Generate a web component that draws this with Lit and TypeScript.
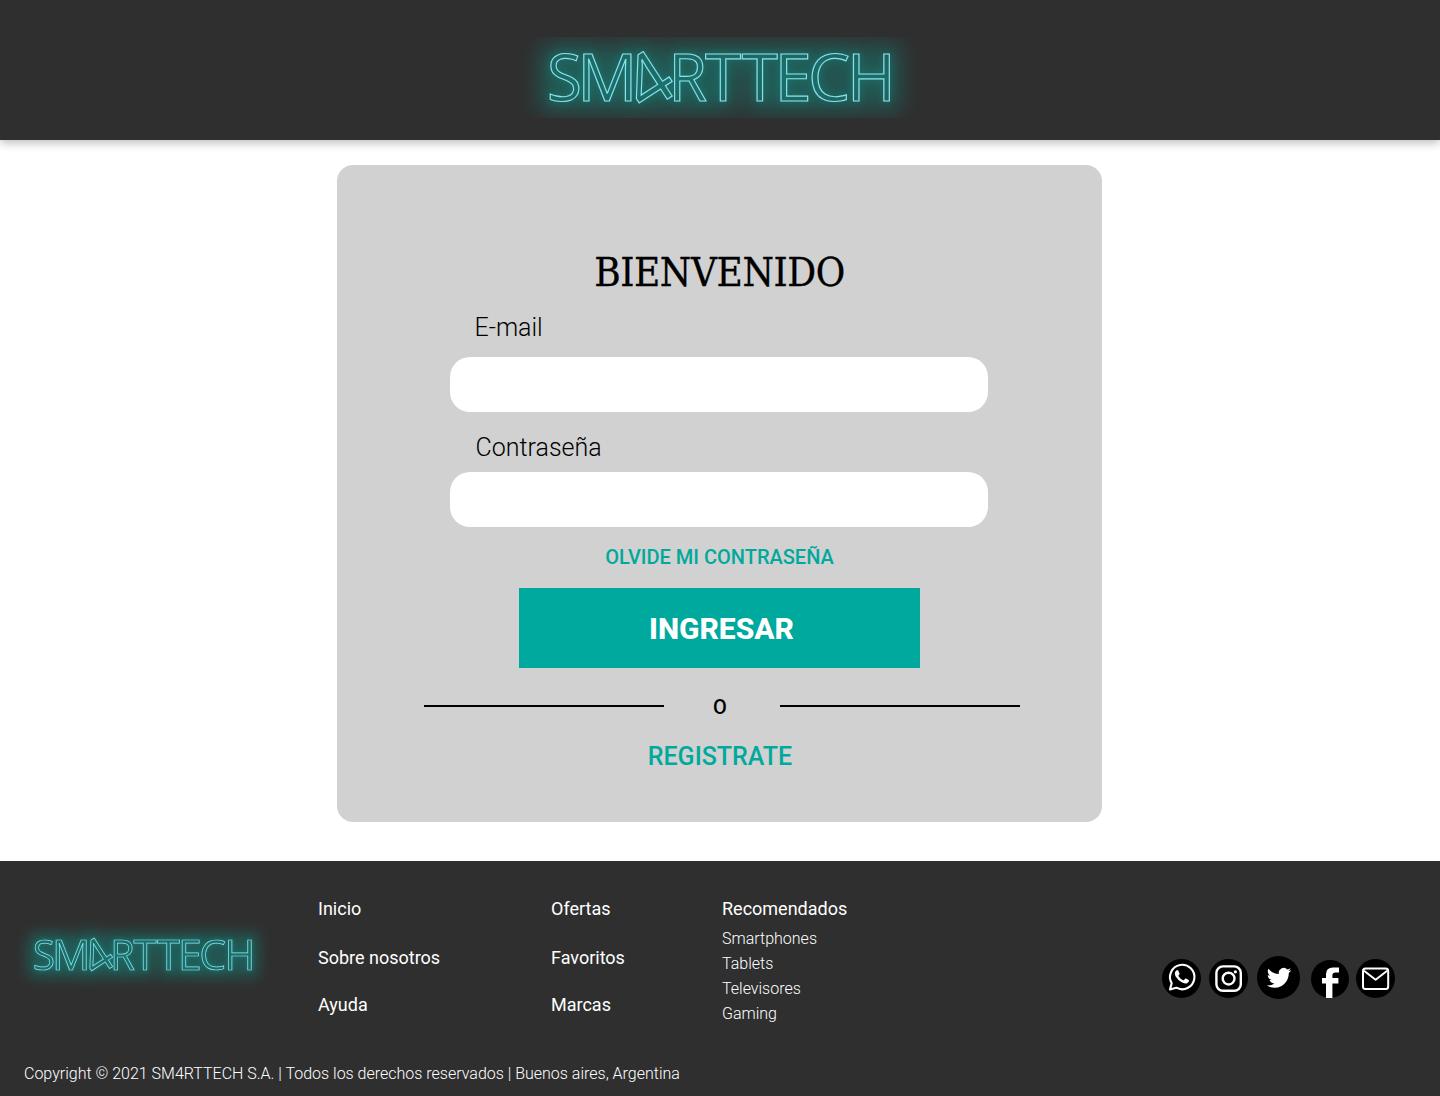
import { LitElement, html, css, svg } from "lit";
import { customElement, property } from "lit/decorators.js";

// Glyph, x of its origin and horizontal scale; all upright letters share a 101px baseline.
const LETTERS: [string, number, number][] = [
  ["S", 546.9, 0.98], ["M", 577.2, 1.03], ["R", 668.4, 0.96], ["T", 705, 1.01],
  ["T", 741.7, 1.01], ["E", 774.6, 1.03], ["C", 808, 1.03], ["H", 847, 1.02],
];

@customElement("neon-logo")
export class NeonLogo extends LitElement {
  @property() box = "510 37 420 81";
  @property({ type: Number }) glowTop = 37;
  @property({ type: Number }) glowHeight = 81;
  static styles = css`
    :host { display: block; }
    svg { display: block; width: 100%; height: 100%; overflow: visible; }
    text {
      font-family: "Open Sans", "Liberation Sans", sans-serif;
      font-size: 65px;
      fill: rgba(40, 130, 128, 0.15);
      stroke: #83e3ee;
      stroke-width: 1.15px;
    }
    .four { font-size: 74px; }
  `;
  render() {
    return html`<svg viewBox=${this.box} aria-label="SM4RTTECH">
      <defs>
        <filter id="neon" filterUnits="userSpaceOnUse" x="490" y=${this.glowTop} width="460" height=${this.glowHeight} color-interpolation-filters="sRGB">
          <feComponentTransfer in="SourceAlpha" result="solid"><feFuncA type="linear" slope="6" /></feComponentTransfer>
          <feMorphology in="solid" operator="dilate" radius="9" result="fat" />
          <feGaussianBlur in="fat" stdDeviation="11" result="wide" />
          <feFlood flood-color="#0f9a90" flood-opacity="0.42" />
          <feComposite in2="wide" operator="in" result="haze" />
          <feGaussianBlur in="solid" stdDeviation="4" result="near" />
          <feFlood flood-color="#0fa89e" flood-opacity="0.3" />
          <feComposite in2="near" operator="in" result="halo" />
          <feMerge>
            <feMergeNode in="haze" />
            <feMergeNode in="halo" />
            <feMergeNode in="SourceGraphic" />
          </feMerge>
        </filter>
      </defs>
      <g filter="url(#neon)">
        ${LETTERS.map(([c, x, s]) => svg`<text transform="translate(${x} 101) scale(${s} 1)">${c}</text>`)}
        <text class="four" transform="translate(644.4 114) rotate(-33)">4</text>
      </g>
    </svg>`;
  }
}

@customElement("app-root")
export class AppRoot extends LitElement {
  static styles = css`
    :host {
      display: flex;
      flex-direction: column;
      height: 1096px;
      background: #fff;
      font-family: Roboto, "Liberation Sans", sans-serif;
      color: #000;
    }
    * { box-sizing: border-box; }
    a { color: inherit; text-decoration: none; }
    header {
      height: 140px;
      padding-top: 37px;
      background: #2f2f2f;
      box-shadow: 0 3px 9px rgba(0, 0, 0, 0.26);
      flex: none;
    }
    .logo-top { width: 420px; height: 81px; margin: 0 auto; }
    main { height: 721px; padding: 25px 0 0 337px; flex: none; }
    .card {
      width: 765px;
      height: 657px;
      padding: 79px 82px 0;
      border-radius: 16px;
      background: #d1d1d1;
      display: flex;
      flex-direction: column;
      align-items: center;
    }
    h1 {
      margin: 0;
      font: 400 40px/56px "Roboto Slab", "DejaVu Serif Condensed", "DejaVu Serif", serif;
      font-stretch: condensed;
      letter-spacing: -0.4px;
      height: 56px;
      -webkit-text-stroke: 0.3px #000;
      white-space: nowrap;
    }
    .field { width: 538px; margin-right: 1px; display: flex; flex-direction: column; }
    .field label { padding-left: 24.5px; font-weight: 300; font-size: 25px; line-height: 32px; }
    .field input { height: 55px; border: 0; border-radius: 20px; background: #fff; padding: 0 24px; font: 300 22px Roboto, sans-serif; }
    .mail { margin-top: 12px; gap: 13px; }
    .pass { margin-top: 20px; gap: 8px; }
    .pass label { padding-left: 25.5px; }
    .forgot { margin-top: 17px; font-weight: 500; font-size: 20px; line-height: 26px; color: #00a99d; }
    button {
      width: 401px;
      height: 80px;
      margin-top: 18px;
      padding: 0 0 0 4px;
      border: 0;
      background: #00a99d;
      color: #fff;
      font: 800 30px Roboto, sans-serif;
    }
    .or { width: 596px; margin: 24px 0 0 5px; height: 28px; display: flex; align-items: center; }
    .or i { flex: 0 0 240px; height: 2px; background: #000; }
    .or span { flex: 1; text-align: center; font-weight: 500; font-size: 20px; line-height: 28px; padding: 2px 4px 0 0; }
    .register { margin: 21px 0 0 1px; font-weight: 500; font-size: 25px; line-height: 32px; color: #00a99d; }
    footer {
      flex: 1;
      background: #2f2f2f;
      color: #fff;
      display: grid;
      grid-template-columns: 318px 233px 171px 440px 1fr;
      grid-template-rows: 190px 1fr;
    }
    .logo-foot { width: 290px; height: 129px; margin-top: 40px; }
    nav { display: flex; flex-direction: column; padding-top: 36px; gap: 24px; font-size: 18px; line-height: 24px; }
    nav .mid { padding-top: 1px; margin-bottom: -1px; }
    nav.recs { gap: 0; }
    nav.recs .small { font-weight: 300; font-size: 16px; line-height: 25px; }
    nav.recs .small:nth-child(2) { margin-top: 5px; }
    .social { display: flex; align-items: flex-start; height: 43px; margin-top: 95px; }
    .social svg { display: block; margin-top: 2.7px; }
    .social .ig { margin-left: 8px; }
    .social .tw { margin: 0 0 0 9px; }
    .social .fb { margin: 3.7px 0 0 11px; }
    .social .em { margin-left: 7px; }
    .copy { grid-column: 1 / -1; padding: 11px 0 0 24px; font-weight: 300; font-size: 16px; line-height: 24px; }
  `;
  render() {
    return html`
      <header><neon-logo class="logo-top"></neon-logo></header>
      <main>
        <form class="card" @submit=${(e: Event) => e.preventDefault()}>
          <h1>BIENVENIDO</h1>
          <div class="field mail"><label for="mail">E-mail</label><input id="mail" type="email" /></div>
          <div class="field pass"><label for="pass">Contraseña</label><input id="pass" type="password" /></div>
          <a class="forgot" href="#">OLVIDE MI CONTRASEÑA</a>
          <button>INGRESAR</button>
          <div class="or"><i></i><span>O</span><i></i></div>
          <a class="register" href="#">REGISTRATE</a>
        </form>
      </main>
      <footer>
        <neon-logo class="logo-foot" box="495.6 -6.7 454.5 202.2" .glowTop=${0} .glowHeight=${160}></neon-logo>
        <nav><a href="#">Inicio</a><a class="mid" href="#">Sobre nosotros</a><a href="#">Ayuda</a></nav>
        <nav><a href="#">Ofertas</a><a class="mid" href="#">Favoritos</a><a href="#">Marcas</a></nav>
        <nav class="recs">
          <a href="#">Recomendados</a>
          ${["Smartphones", "Tablets", "Televisores", "Gaming"].map((t) => html`<a class="small" href="#">${t}</a>`)}
        </nav>
        <div class="social">
          <svg class="wa" width="39" height="39" viewBox="0 0 39 39">
            <circle cx="19.5" cy="19.5" r="19.5" />
            <path d="M8 30.4 L9.7 24.2 A12.2 12.2 0 1 1 14.3 28.7 Z" fill="none" stroke="#fff" stroke-width="2.1" stroke-linejoin="round" />
            <path transform="translate(5.8 3.8) scale(1.17)" d="M17.5 14.4c-.3-.15-1.76-.87-2.03-.97-.27-.1-.47-.15-.67.15-.2.3-.77.97-.94 1.16-.17.2-.35.22-.64.08-.3-.15-1.26-.46-2.39-1.48-.88-.79-1.48-1.76-1.65-2.06-.17-.3-.02-.46.13-.6.13-.14.3-.35.45-.53.15-.17.2-.3.3-.5.1-.2.05-.37-.03-.52-.07-.15-.67-1.61-.91-2.2-.25-.58-.49-.5-.67-.51h-.57c-.2 0-.52.07-.8.37-.27.3-1.04 1.02-1.04 2.48s1.07 2.88 1.22 3.07c.15.2 2.1 3.2 5.08 4.49 2.98 1.28 2.98.85 3.52.8.54-.05 1.76-.72 2-1.41.25-.7.25-1.29.18-1.41-.07-.13-.27-.2-.57-.35Z" fill="#fff" />
          </svg>
          <svg class="ig" width="39" height="39" viewBox="0 0 39 39">
            <circle cx="19.5" cy="19.5" r="19.5" />
            <g fill="none" stroke="#fff" stroke-width="2.4">
              <rect x="7.4" y="7.4" width="24.4" height="24.4" rx="6.5" />
              <circle cx="19.6" cy="19.6" r="5.9" />
            </g>
            <circle cx="26.4" cy="12.8" r="1.6" fill="#fff" />
          </svg>
          <svg class="tw" width="43" height="43" viewBox="0 0 43 43">
            <circle cx="21.5" cy="21.5" r="21.5" />
            <path transform="translate(9.8 9.6) scale(1.02)" d="M23.95 4.57a10 10 0 0 1-2.82.77 4.96 4.96 0 0 0 2.16-2.72c-.95.55-2 .95-3.13 1.18a4.92 4.92 0 0 0-8.38 4.48C7.69 8.1 4.07 6.13 1.64 3.16a4.82 4.82 0 0 0-.67 2.48c0 1.71.87 3.21 2.19 4.1a4.9 4.9 0 0 1-2.23-.62v.06a4.92 4.92 0 0 0 3.95 4.83 5 5 0 0 1-2.21.08 4.94 4.94 0 0 0 4.6 3.42A9.87 9.87 0 0 1 0 19.54a13.99 13.99 0 0 0 7.55 2.21c9.05 0 14-7.5 14-13.98 0-.21 0-.42-.02-.63a9.94 9.94 0 0 0 2.46-2.55Z" fill="#fff" />
          </svg>
          <svg class="fb" width="38" height="38" viewBox="0 0 38 38">
            <circle cx="19" cy="19" r="19" />
            <path d="M15 38V23.4H11V18H15V14.2Q15 7.4 22 7.4H28V12.4H24.4Q21.4 12.4 21.4 15.2V18H27.4V23.4H21.4V38Z" fill="#fff" />
          </svg>
          <svg class="em" width="39" height="39" viewBox="0 0 39 39">
            <circle cx="19.5" cy="19.5" r="19.5" />
            <g fill="none" stroke="#fff" stroke-width="2" stroke-linejoin="round">
              <rect x="7" y="9.6" width="25.2" height="20.4" rx="2.5" />
              <path d="M8 11.8 L19.6 20.8 L31.2 11.8" />
            </g>
          </svg>
        </div>
        <div class="copy">Copyright © 2021 SM4RTTECH S.A. | Todos los derechos reservados | Buenos aires, Argentina</div>
      </footer>
    `;
  }
}
